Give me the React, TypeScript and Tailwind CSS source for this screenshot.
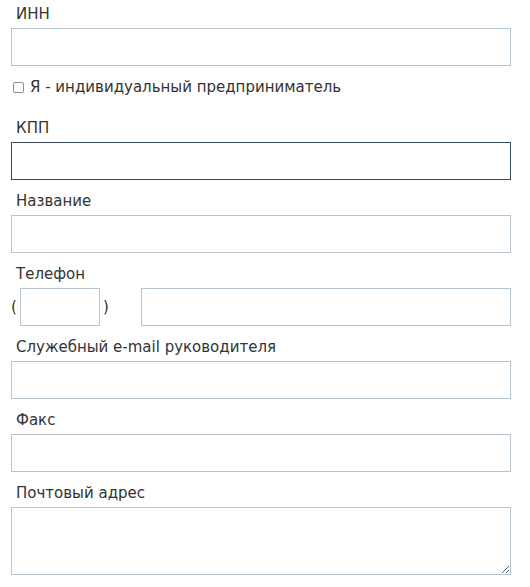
import React from "react";

// Plain form: label above a bordered input, rows stacked by flow.

const FONT = "font-['DejaVu_Sans',Verdana,sans-serif]";
const INPUT =
  "block h-[38px] w-[500px] border border-[#b5c4cf] bg-white outline-none";

function Label({ children }: { children: React.ReactNode }) {
  return <div className="h-[18px] pl-[5px] text-[15px] leading-[18px] text-[#333]">{children}</div>;
}

function Field({ label, focused = false }: { label: string; focused?: boolean }) {
  return (
    <div className="mt-[12px] flex flex-col gap-[5px]">
      <Label>{label}</Label>
      <input
        type="text"
        className={
          focused
            ? "block h-[38px] w-[500px] border border-[#3a4b5c] bg-white outline-none"
            : INPUT
        }
      />
    </div>
  );
}

export default function App() {
  return (
    <div className={`${FONT} w-[530px] bg-white pl-[11px] pt-[5px] pb-[12px]`}>
      {/* ИНН */}
      <div className="flex flex-col gap-[5px]">
        <Label>ИНН</Label>
        <input type="text" className={INPUT} />
      </div>

      {/* sole proprietor checkbox */}
      <label className="mt-[12px] mb-[23px] flex h-[18px] items-center gap-[6px] pl-[2px] text-[15px] leading-[18px] text-[#333]">
        <span className="block h-[11px] w-[11px] rounded-[2px] border border-[#8e8e8e] bg-white" />
        <span>Я - индивидуальный предприниматель</span>
      </label>

      <Field label="КПП" focused />
      <Field label="Название" />

      {/* phone: (code) number */}
      <div className="mt-[12px] flex flex-col gap-[5px]">
        <Label>Телефон</Label>
        <div className="flex h-[38px] items-center text-[15px] text-[#333]">
          <span className="w-[9px]">(</span>
          <input type="text" className="block h-[38px] w-[80px] border border-[#b5c4cf] bg-white outline-none" />
          <span className="ml-[3px] w-[38px]">)</span>
          <input type="text" className="block h-[38px] w-[370px] border border-[#b5c4cf] bg-white outline-none" />
        </div>
      </div>

      <Field label="Служебный e-mail руководителя" />
      <Field label="Факс" />

      <div className="mt-[12px] flex flex-col gap-[5px]">
        <Label>Почтовый адрес</Label>
        <textarea className="block h-[68px] w-[500px] resize border border-[#b5c4cf] bg-white outline-none" />
      </div>
    </div>
  );
}
